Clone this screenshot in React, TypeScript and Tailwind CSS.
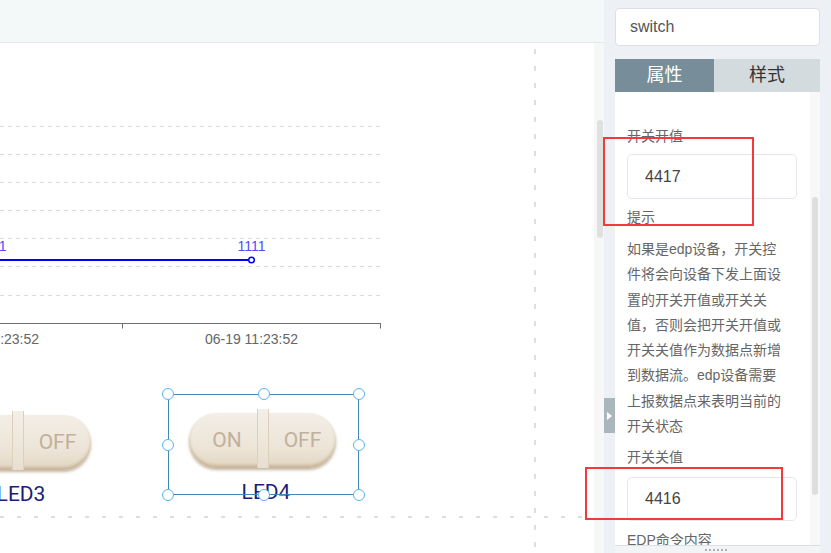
import React from "react";

function Pill() {
  return (
    <div className="absolute left-[21px] top-[19px] h-[55px] w-[147px] rounded-full bg-[linear-gradient(180deg,#f3eee6_0%,#ece4d7_65%,#e2d6c3_100%)] shadow-[inset_0_-3px_3px_rgba(185,160,125,0.6),0_2px_3px_rgba(140,110,70,0.5)] font-['Roboto',sans-serif] text-[21px] text-[#c2b09a]">
      <div className="absolute left-[8px] top-0 flex h-full w-[60px] items-center justify-center">ON</div>
      <div className="absolute left-[80px] top-0 flex h-full w-[67px] items-center justify-center">OFF</div>
      <div className="absolute left-[68px] top-[-4px] bottom-0 w-[12px] border-x border-[#dccfbc] bg-[linear-gradient(180deg,#f4efe7,#e8dfd0)]" />
    </div>
  );
}

function Handle({ cls }: { cls: string }) {
  return <div className={cls} />;
}

function SwitchWidget({ label, pos, selected }: { label: string; pos: string; selected?: boolean }) {
  return (
    <div className={pos}>
      <Pill />
      <div className="absolute left-0 top-[86px] w-[196px] text-center font-['Roboto',sans-serif] text-[21px] leading-[24px] text-[#1c1c74]">
        {label}
      </div>
      {selected && (
        <>
          <div className="absolute inset-0 border-[1.5px] border-[#4387b6]" />
          <Handle cls="absolute left-[-6px] top-[-6px] h-[12px] w-[12px] rounded-full border-[1.5px] border-[#5ab3ef] bg-white" />
          <Handle cls="absolute left-[89.5px] top-[-6px] h-[12px] w-[12px] rounded-full border-[1.5px] border-[#5ab3ef] bg-white" />
          <Handle cls="absolute right-[-6px] top-[-6px] h-[12px] w-[12px] rounded-full border-[1.5px] border-[#5ab3ef] bg-white" />
          <Handle cls="absolute left-[-6px] top-[44.5px] h-[12px] w-[12px] rounded-full border-[1.5px] border-[#5ab3ef] bg-white" />
          <Handle cls="absolute right-[-6px] top-[44.5px] h-[12px] w-[12px] rounded-full border-[1.5px] border-[#5ab3ef] bg-white" />
          <Handle cls="absolute left-[-6px] bottom-[-6px] h-[12px] w-[12px] rounded-full border-[1.5px] border-[#5ab3ef] bg-white" />
          <Handle cls="absolute left-[89.5px] bottom-[-6px] h-[12px] w-[12px] rounded-full border-[1.5px] border-[#5ab3ef] bg-white" />
          <Handle cls="absolute right-[-6px] bottom-[-6px] h-[12px] w-[12px] rounded-full border-[1.5px] border-[#5ab3ef] bg-white" />
        </>
      )}
    </div>
  );
}

function Chart() {
  const grid = [26.5, 54.5, 82.5, 110.5, 138.5, 166.5, 195.5];
  return (
    <svg className="absolute left-0 top-[57px]" width="400" height="260" viewBox="0 0 400 260">
      {grid.map((y) => (
        <line key={y} x1="0" x2="381" y1={y} y2={y} stroke="#dcdcdc" strokeWidth="1" strokeDasharray="4 4" />
      ))}
      <line x1="0" x2="381" y1="223.5" y2="223.5" stroke="#6f6f6f" strokeWidth="1" />
      <line x1="122.5" x2="122.5" y1="223.5" y2="228.5" stroke="#6f6f6f" strokeWidth="1" />
      <line x1="380.5" x2="380.5" y1="223.5" y2="228.5" stroke="#6f6f6f" strokeWidth="1" />
      <text x="-7.5" y="244" textAnchor="middle" fontSize="14" fill="#666">06-19 11:23:52</text>
      <text x="251.5" y="244" textAnchor="middle" fontSize="14" fill="#666">06-19 11:23:52</text>
      <line x1="0" x2="251.5" y1="160" y2="160" stroke="#0000ff" strokeWidth="2" />
      <circle cx="251.5" cy="160" r="2.8" fill="#fff" stroke="#0000ff" strokeWidth="1.5" />
      <text x="-7.5" y="151" textAnchor="middle" fontSize="14" fill="#4c4cff">1111</text>
      <text x="251.5" y="151" textAnchor="middle" fontSize="14" fill="#4c4cff">1111</text>
    </svg>
  );
}

export default function App() {
  return (
    <div className="relative flex h-[553px] w-[831px] overflow-hidden bg-white font-['Liberation_Sans','Noto_Sans_CJK_SC',sans-serif]">
      {/* main editor area */}
      <div className="flex w-[604px] shrink-0 flex-col">
        <div className="h-[43px] shrink-0 border-b border-[#e1e9ea] bg-[#f3f8f9]" />
        <div className="flex min-h-0 flex-1">
          <div className="relative flex-1 overflow-hidden bg-white">
            <Chart />
            <SwitchWidget label="LED3" pos="absolute left-[-77px] top-[353px] h-[101px] w-[191px]" />
            <SwitchWidget label="LED4" pos="absolute left-[168px] top-[351px] h-[101px] w-[191px]" selected />
            <div className="absolute left-[534px] top-[6px] bottom-0 w-[2px] bg-[repeating-linear-gradient(180deg,#dedede_0px,#dedede_5px,transparent_5px,transparent_17px)]" />
            <div className="absolute left-0 top-[473px] h-[2px] w-[590px] bg-[repeating-linear-gradient(90deg,#dedede_0px,#dedede_4px,transparent_4px,transparent_17px)]" />
          </div>
          <div className="relative w-[10px] shrink-0 bg-[#f7f7f7]">
            <div className="absolute left-[3px] top-[77px] h-[118px] w-[6px] rounded-full bg-[#e0e0e0]" />
          </div>
        </div>
      </div>

      {/* right property panel */}
      <aside className="relative flex w-[227px] shrink-0 flex-col bg-[#edf0f4] px-[11px] pt-[8px]">
        <div className="flex h-[38px] shrink-0 items-center rounded-[4px] border border-[#dcdfe6] bg-white pl-[14px] text-[16px] text-[#555]">
          switch
        </div>
        <div className="mt-[13px] flex h-[33px] shrink-0 text-[18px]">
          <div className="flex w-[99px] items-center justify-center bg-[#778e9a] text-white">属性</div>
          <div className="flex flex-1 items-center justify-center bg-[#d3dbde] text-[#333]">样式</div>
        </div>
        <div className="flex min-h-0 flex-1 bg-white">
          <div className="min-w-0 flex-1 overflow-hidden pl-[12px] pr-[13px] pt-[34px] text-[14px] text-[#666]">
            <div className="leading-[20px]">开关开值</div>
            <div className="mt-[8px] flex h-[45px] items-center rounded-[5px] border border-[#e4e7ed] pl-[17px] text-[16px] text-[#444]">
              4417
            </div>
            <div className="mt-[8px] leading-[20px]">提示</div>
            <p className="mt-[10px] w-[160px] leading-[25.3px]">
              如果是edp设备，开关控件将会向设备下发上面设置的开关开值或开关关值，否则会把开关开值或开关关值作为数据点新增到数据流。edp设备需要上报数据点来表明当前的开关状态
            </p>
            <div className="mt-[8px] leading-[20px]">开关关值</div>
            <div className="mt-[10px] flex h-[44px] items-center rounded-[5px] border border-[#e4e7ed] pl-[17px] text-[16px] text-[#444]">
              4416
            </div>
            <div className="mt-[9px] leading-[20px]">EDP命令内容</div>
          </div>
          <div className="relative w-[10px] shrink-0 bg-[#f8f8f9]">
            <div className="absolute left-[2px] top-[105px] h-[298px] w-[6px] rounded-full bg-[#dedede]" />
          </div>
        </div>
        <div className="flex h-[8px] shrink-0 items-center justify-center gap-[2px] border-t border-[#dcdfe6] bg-[#f3f4f6] pr-[4px]">
          <span className="h-[2px] w-[2px] bg-[#b0b0b0]" />
          <span className="h-[2px] w-[2px] bg-[#b0b0b0]" />
          <span className="h-[2px] w-[2px] bg-[#b0b0b0]" />
          <span className="h-[2px] w-[2px] bg-[#b0b0b0]" />
          <span className="h-[2px] w-[2px] bg-[#b0b0b0]" />
          <span className="h-[2px] w-[2px] bg-[#b0b0b0]" />
        </div>
        {/* collapse handle */}
        <div className="absolute left-0 top-[398px] flex h-[35px] w-[11px] items-center justify-center bg-[#a9b6bc]">
          <div className="h-0 w-0 border-y-[4px] border-l-[5px] border-y-transparent border-l-white" />
        </div>
      </aside>

      {/* annotation boxes */}
      <div className="absolute left-[603px] top-[137px] h-[89px] w-[151px] border-2 border-[#f23a3a]" />
      <div className="absolute left-[585px] top-[467px] h-[53px] w-[198px] border-2 border-[#f23a3a]" />
    </div>
  );
}
